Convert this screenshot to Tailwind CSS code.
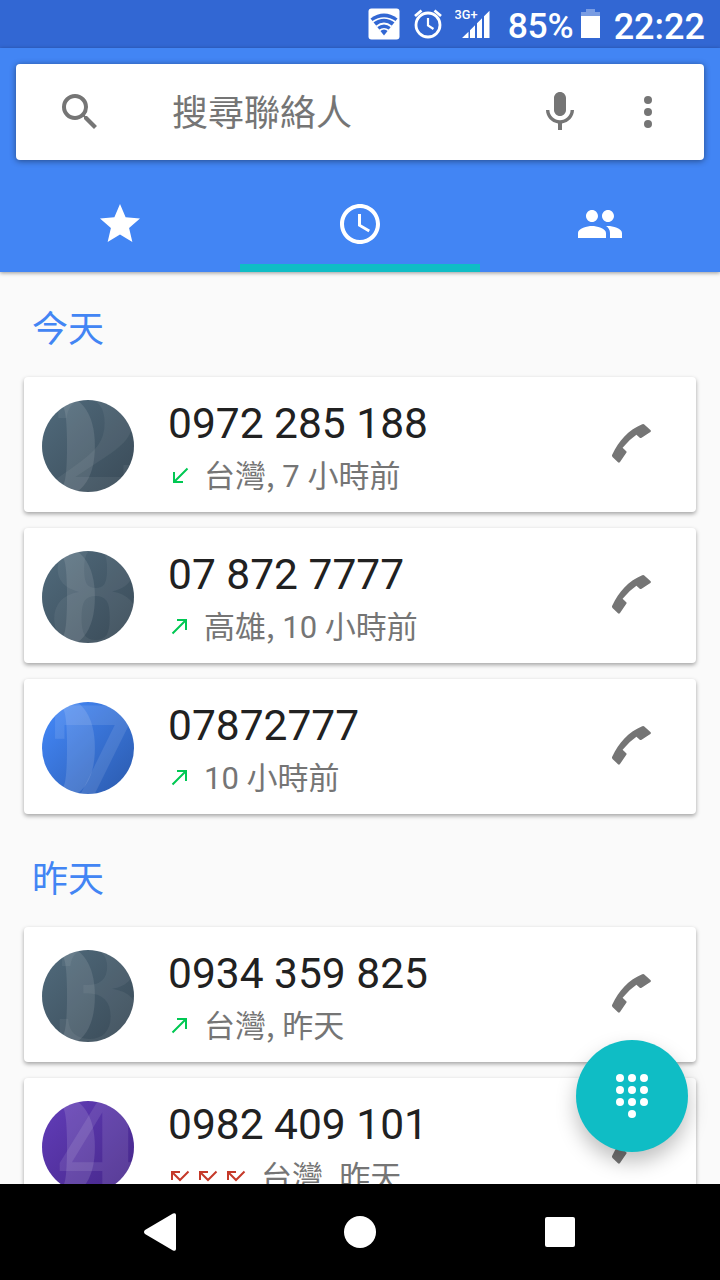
<!DOCTYPE html>
<html lang="zh-Hant">
<head>
    <meta charset="UTF-8">
    <meta name="viewport" content="width=device-width, initial-scale=1.0">
    <title>電話</title>
    <script src="https://cdn.jsdelivr.net/npm/@tailwindcss/browser@4"></script>
</head>
<body class="bg-[#fafafa] font-['Roboto','Noto_Sans_CJK_TC',sans-serif]">
    <!-- shared icons -->
    <svg class="absolute w-0 h-0">
        <defs>
            <linearGradient id="slate" x1="0" y1="0" x2="1" y2="1"><stop offset="0.1" stop-color="#4e6778"/><stop offset="0.95" stop-color="#3b4c59"/></linearGradient>
            <linearGradient id="blue" x1="0" y1="0" x2="1" y2="1"><stop offset="0.1" stop-color="#4285f4"/><stop offset="0.95" stop-color="#2c5cb0"/></linearGradient>
            <linearGradient id="purple" x1="0" y1="0" x2="1" y2="1"><stop offset="0.1" stop-color="#5f3bb4"/><stop offset="0.95" stop-color="#46278a"/></linearGradient>
            <clipPath id="round"><circle cx="46" cy="46" r="46"/></clipPath>
        </defs>
        <symbol id="phone" viewBox="0 0 39 39"><path d="M30.2.3Q31.4-.3 32.3.4L38.4 6Q39.4 7 38.4 7.900L29.600 13.700Q28.500 14.400 27.500 13.500L24.400 10.800Q17.200 15.600 10.600 23.800L14 26.900Q15 27.700 14.300 28.700L8 38Q7 39.200 6 38.200L.5 32.900Q-.4 32 .3 30.500C7 16.500 16 6.500 30.200.3Z"/></symbol>
        <symbol id="incoming" viewBox="0 0 18 18"><path d="M16.500 2.500 3.500 15.500M3 6v10h9" fill="none" stroke="currentColor" stroke-width="2"/></symbol>
        <symbol id="outgoing" viewBox="0 0 18 18"><path d="M1.500 16.500 14.500 3.500M6 3h9v10" fill="none" stroke="currentColor" stroke-width="2"/></symbol>
        <symbol id="missed" viewBox="0 0 20 12"><path d="M2 10V2h8M2 2l8 8 8.500-8.500" fill="none" stroke="currentColor" stroke-width="2"/></symbol>
    </svg>

    <div class="relative w-[720px] h-[1280px] flex flex-col overflow-hidden">
        <!-- status bar -->
        <div class="h-12 shrink-0 bg-[#3267d3] flex items-center justify-end pr-[15px] text-white">
            <svg class="w-8 h-8 mr-[14px]" viewBox="0 0 32 32">
                <rect x="0.500" y="0.500" width="31" height="31" rx="3" fill="#fff"/>
                <path d="M2.500 10.500Q16 0.500 29.500 10.500L16 27.500Z" fill="#3267d3"/>
                <path d="M4.500 14Q16 6 27.500 14M8.500 18.500Q16 12.500 23.500 18.500M11.500 22.500Q16 19 20.500 22.500" fill="none" stroke="#fff" stroke-width="1.700"/>
            </svg>
            <svg class="w-7 h-8 mr-[13px]" viewBox="0 0 28 32" fill="none" stroke="#fff">
                <circle cx="14" cy="17" r="12" stroke-width="2.800"/>
                <path d="M14 10v7.500l5.500 3.500" stroke-width="2.200"/>
                <path d="M1 8 7.500 2.500M20.500 2.500 27 8" stroke-width="2.800"/>
            </svg>
            <svg class="w-9 h-8 mr-[17px]" viewBox="0 0 36 32" fill="#fff">
                <text x="-0.500" y="11" font-size="13.500" font-weight="500" textLength="23" lengthAdjust="spacingAndGlyphs">3G+</text>
                <path d="M7 30 13.500 23.700V30ZM15 22.200 20 17.200V30H15ZM22 15.200 27 10.200V30H22ZM29 8.200 34.500 2.700V30H29Z"/>
            </svg>
            <span class="text-[35.5px] leading-none font-medium pt-[5px] w-[65px] mr-[8px] -tracking-[0.3px] whitespace-nowrap">85%</span>
            <svg class="w-[19px] h-8 mr-[14px]" viewBox="0 0 19 32" fill="#fff">
                <path d="M0 4H5V1H14V4H19V8H0Z" opacity="0.350"/>
                <path d="M0 8H19V30H0Z"/>
            </svg>
            <span class="text-[36px] leading-none font-medium pt-[5px] whitespace-nowrap">22:22</span>
        </div>

        <!-- header -->
        <header class="relative h-[224px] shrink-0 bg-[#4285f4] pt-4 flex flex-col shadow-[0_1px_4px_rgba(0,0,0,0.4)]">
            <div class="mx-4 h-24 bg-white rounded flex items-center pl-10 pr-8 text-[#757575] shadow-[0_1px_6px_rgba(0,0,0,0.45)]">
                <svg class="w-12 h-12" viewBox="0 0 24 24" fill="currentColor"><path d="M15.500 14h-.79l-.28-.27A6.471 6.471 0 0 0 16 9.500 6.500 6.500 0 1 0 9.500 16c1.610 0 3.090-.59 4.230-1.570l.27.28v.79l5 4.990L20.490 19l-4.990-5zm-6 0C7.010 14 5 11.990 5 9.500S7.010 5 9.500 5 14 7.010 14 9.500 11.990 14 9.500 14z"/></svg>
                <span class="ml-[68px] flex-1 pt-1 text-[36px] leading-none">搜尋聯絡人</span>
                <svg class="w-12 h-12 mr-10" viewBox="0 0 24 24" fill="currentColor"><path d="M12 14c1.660 0 3-1.340 3-3V5c0-1.660-1.340-3-3-3S9 3.340 9 5v6c0 1.660 1.340 3 3 3zm5.300-3c0 3-2.540 5.100-5.300 5.100S6.700 14 6.700 11H5c0 3.410 2.720 6.230 6 6.720V21h2v-3.280c3.280-.48 6-3.300 6-6.720h-1.700z"/></svg>
                <svg class="w-12 h-12" viewBox="0 0 24 24" fill="currentColor"><circle cx="12" cy="6" r="2"/><circle cx="12" cy="12" r="2"/><circle cx="12" cy="18" r="2"/></svg>
            </div>
            <nav class="mt-4 h-24 grid grid-cols-3 text-white">
                <div class="flex items-center justify-center">
                    <svg class="w-12 h-12" viewBox="0 0 24 24" fill="currentColor"><path d="M12 17.270 18.180 21l-1.640-7.030L22 9.240l-7.190-.61L12 2 9.190 8.630 2 9.240l5.460 4.730L5.820 21z"/></svg>
                </div>
                <div class="flex items-center justify-center border-b-8 border-[#0fbdc5] pt-2">
                    <svg class="w-12 h-12" viewBox="0 0 24 24" fill="currentColor"><path d="M11.990 2C6.470 2 2 6.480 2 12s4.470 10 9.990 10C17.520 22 22 17.520 22 12S17.520 2 11.990 2zM12 20c-4.420 0-8-3.580-8-8s3.580-8 8-8 8 3.580 8 8-3.580 8-8 8zm.5-13H11v6l5.250 3.150.75-1.230-4.500-2.670z"/></svg>
                </div>
                <div class="flex items-center justify-center">
                    <svg class="w-12 h-12" viewBox="0 0 24 24" fill="currentColor"><path d="M16 11c1.660 0 2.990-1.340 2.990-3S17.660 5 16 5c-1.660 0-3 1.340-3 3s1.340 3 3 3zm-8 0c1.660 0 2.990-1.340 2.990-3S9.660 5 8 5C6.340 5 5 6.340 5 8s1.340 3 3 3zm0 2c-2.330 0-7 1.170-7 3.500V19h14v-2.500c0-2.330-4.670-3.500-7-3.500zm8 0c-.29 0-.62.02-.97.05 1.160.84 1.970 1.970 1.970 3.450V19h6v-2.500c0-2.330-4.670-3.500-7-3.500z"/></svg>
                </div>
            </nav>
        </header>

        <!-- call log -->
        <main class="flex-1 min-h-0 overflow-hidden px-6">
            <h2 class="h-[105px] pl-2 pt-[40px] text-[36px] leading-[36px] text-[#4285f4]">今天</h2>
            <div class="flex flex-col gap-4">
                <div class="h-[135px] bg-white rounded flex items-center pl-[18px] pr-[45px] shadow-[0_2px_4px_rgba(0,0,0,0.35)]">
                    <svg class="w-[92px] h-[92px] mt-[3px]" viewBox="0 0 92 92">
                        <g clip-path="url(#round)" font-family="DejaVu Serif" font-weight="bold" font-size="140" fill="#fff" fill-opacity="0.110">
                            <rect width="92" height="92" fill="url(#slate)" fill-opacity="1"/>
                            <text x="-38" y="97">0</text><text x="6" y="95" fill-opacity="0.060">2</text>
                        </g>
                    </svg>
                    <div class="ml-[34px] mt-2 flex-1">
                        <p class="text-[42.500px] leading-[50px] text-[#212121]">0972 285 188</p>
                        <p class="h-[50px] pt-1.5 flex items-center text-[31px] leading-[44px] text-[#757575]"><svg class="w-[18px] h-[18px] ml-[3px] mr-[15px] mb-1 text-[#00c853]"><use href="#incoming"/></svg><span>台灣<span class="font-['Noto_Sans_CJK_TC'] leading-none">,</span> 7 小時前</span></p>
                    </div>
                    <svg class="w-[39px] h-[39px] mb-0.5 fill-[#757575]"><use href="#phone"/></svg>
                </div>
                <div class="h-[135px] bg-white rounded flex items-center pl-[18px] pr-[45px] shadow-[0_2px_4px_rgba(0,0,0,0.35)]">
                    <svg class="w-[92px] h-[92px] mt-[3px]" viewBox="0 0 92 92">
                        <g clip-path="url(#round)" font-family="DejaVu Serif" font-weight="bold" font-size="140" fill="#fff" fill-opacity="0.110">
                            <rect width="92" height="92" fill="url(#slate)" fill-opacity="1"/>
                            <text x="-38" y="97">0</text><text x="5" y="95" fill-opacity="0.060">8</text>
                        </g>
                    </svg>
                    <div class="ml-[34px] mt-2 flex-1">
                        <p class="text-[42.500px] leading-[50px] text-[#212121]">07 872 7777</p>
                        <p class="h-[50px] pt-1.5 flex items-center text-[31px] leading-[44px] text-[#757575]"><svg class="w-[18px] h-[18px] ml-[3px] mr-[15px] mb-1 text-[#00c853]"><use href="#outgoing"/></svg><span>高雄<span class="font-['Noto_Sans_CJK_TC'] leading-none">,</span> 10 小時前</span></p>
                    </div>
                    <svg class="w-[39px] h-[39px] mb-0.5 fill-[#757575]"><use href="#phone"/></svg>
                </div>
                <div class="h-[135px] bg-white rounded flex items-center pl-[18px] pr-[45px] shadow-[0_2px_4px_rgba(0,0,0,0.35)]">
                    <svg class="w-[92px] h-[92px] mt-[3px]" viewBox="0 0 92 92">
                        <g clip-path="url(#round)" font-family="DejaVu Serif" font-weight="bold" font-size="140" fill="#fff" fill-opacity="0.130">
                            <rect width="92" height="92" fill="url(#blue)" fill-opacity="1"/>
                            <text x="-38" y="97">0</text><text x="2" y="106" fill-opacity="0.100">7</text>
                        </g>
                    </svg>
                    <div class="ml-[34px] mt-2 flex-1">
                        <p class="text-[42.500px] leading-[50px] text-[#212121]">07872777</p>
                        <p class="h-[50px] pt-1.5 flex items-center text-[31px] leading-[44px] text-[#757575]"><svg class="w-[18px] h-[18px] ml-[3px] mr-[15px] mb-1 text-[#00c853]"><use href="#outgoing"/></svg>10 小時前</p>
                    </div>
                    <svg class="w-[39px] h-[39px] mb-0.5 fill-[#757575]"><use href="#phone"/></svg>
                </div>
            </div>

            <h2 class="h-[113px] pl-2 pt-[48px] text-[36px] leading-[36px] text-[#4285f4]">昨天</h2>
            <div class="flex flex-col gap-4">
                <div class="h-[135px] bg-white rounded flex items-center pl-[18px] pr-[45px] shadow-[0_2px_4px_rgba(0,0,0,0.35)]">
                    <svg class="w-[92px] h-[92px] mt-[3px]" viewBox="0 0 92 92">
                        <g clip-path="url(#round)" font-family="DejaVu Serif" font-weight="bold" font-size="140" fill="#fff" fill-opacity="0.110">
                            <rect width="92" height="92" fill="url(#slate)" fill-opacity="1"/>
                            <text x="-38" y="97">0</text><text x="8" y="95" fill-opacity="0.060">3</text>
                        </g>
                    </svg>
                    <div class="ml-[34px] mt-2 flex-1">
                        <p class="text-[42.500px] leading-[50px] text-[#212121]">0934 359 825</p>
                        <p class="h-[50px] pt-1.5 flex items-center text-[31px] leading-[44px] text-[#757575]"><svg class="w-[18px] h-[18px] ml-[3px] mr-[15px] mb-1 text-[#00c853]"><use href="#outgoing"/></svg><span>台灣<span class="font-['Noto_Sans_CJK_TC'] leading-none">,</span> 昨天</span></p>
                    </div>
                    <svg class="w-[39px] h-[39px] mb-0.5 fill-[#757575]"><use href="#phone"/></svg>
                </div>
                <div class="h-[135px] bg-white rounded flex items-center pl-[18px] pr-[45px] shadow-[0_2px_4px_rgba(0,0,0,0.35)]">
                    <svg class="w-[92px] h-[92px] mt-[3px]" viewBox="0 0 92 92">
                        <g clip-path="url(#round)" font-family="DejaVu Serif" font-weight="bold" font-size="140" fill="#fff" fill-opacity="0.130">
                            <rect width="92" height="92" fill="url(#purple)" fill-opacity="1"/>
                            <text x="-38" y="97">0</text><text x="12" y="97" fill-opacity="0.100">4</text>
                        </g>
                    </svg>
                    <div class="ml-[34px] mt-2 flex-1">
                        <p class="text-[42.500px] leading-[50px] text-[#212121]">0982 409 101</p>
                        <p class="h-[50px] pt-1.5 flex items-center text-[31px] leading-[44px] text-[#757575]">
                            <span class="flex gap-2 ml-[2px] mr-[15px] mb-1 text-[#c53929]">
                                <svg class="w-5 h-3"><use href="#missed"/></svg>
                                <svg class="w-5 h-3"><use href="#missed"/></svg>
                                <svg class="w-5 h-3"><use href="#missed"/></svg>
                            </span>
                            <span>台灣<span class="font-['Noto_Sans_CJK_TC'] leading-none">,</span> 昨天</span>
                        </p>
                    </div>
                    <svg class="w-[39px] h-[39px] mb-0.5 fill-[#757575]"><use href="#phone"/></svg>
                </div>
            </div>
        </main>

        <!-- dialpad button -->
        <button class="absolute right-8 bottom-32 w-28 h-28 rounded-full bg-[#0fbdc5] flex items-center justify-center shadow-[0_10px_20px_rgba(0,0,0,0.25)]">
            <svg class="w-12 h-12" viewBox="0 0 24 24" fill="#fff">
                <circle cx="6" cy="3" r="2"/><circle cx="12" cy="3" r="2"/><circle cx="18" cy="3" r="2"/>
                <circle cx="6" cy="9" r="2"/><circle cx="12" cy="9" r="2"/><circle cx="18" cy="9" r="2"/>
                <circle cx="6" cy="15" r="2"/><circle cx="12" cy="15" r="2"/><circle cx="18" cy="15" r="2"/>
                <circle cx="12" cy="21" r="2"/>
            </svg>
        </button>

        <!-- navigation bar -->
        <div class="relative h-24 shrink-0 bg-black flex items-center pl-36">
            <svg class="w-8 h-[38px] mr-[168px]" viewBox="0 0 32 38" fill="#fff"><path d="M29 .6Q32-.6 32 2V36Q32 38.600 29 37.400L1 21Q-1 19 1 17Z"/></svg>
            <div class="w-8 h-8 mr-[169px] rounded-full bg-white"></div>
            <div class="w-[30px] h-[30px] rounded-[2px] bg-white"></div>
        </div>
    </div>
</body>
</html>
